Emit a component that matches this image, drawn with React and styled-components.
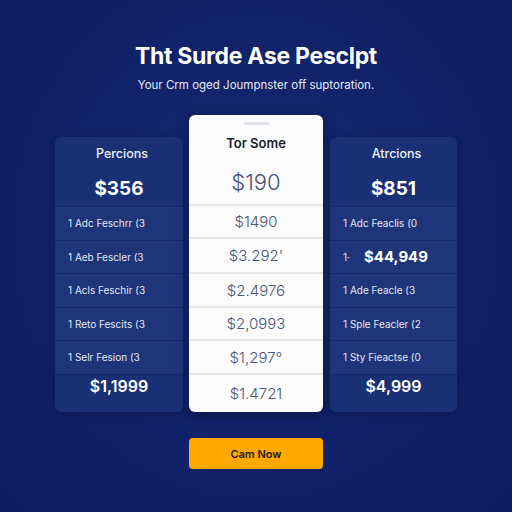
import React from "react";
import styled, { createGlobalStyle } from "styled-components";

const Global = createGlobalStyle`
  html, body { margin: 0; padding: 0; }
  body { background: #0f2166; font-family: Inter, "Open Sans", sans-serif; }
`;

const Page = styled.div`
  width: 512px;
  height: 512px;
  box-sizing: border-box;
  background: radial-gradient(ellipse at 50% 45%, #142a70 0%, #10226a 55%, #0c1c5c 100%);
  display: flex;
  flex-direction: column;
  align-items: center;
  padding-top: 41px;
  color: #fff;
`;

const Title = styled.h1`
  margin: 0;
  font-size: 23px;
  font-weight: 700;
  line-height: 30px;
  letter-spacing: -0.3px;
`;

const Subtitle = styled.p`
  margin: 0;
  margin-top: 6px;
  font-size: 11.5px;
  line-height: 16px;
  color: #e6e9f5;
`;

const Cards = styled.div`
  margin-top: 22px;
  display: flex;
  align-items: flex-end;
  gap: 6px;
`;

const SideCard = styled.div`
  width: ${(p) => p.$w}px;
  height: 275px;
  border-radius: 6px;
  background: #1a3075;
  display: flex;
  flex-direction: column;
  overflow: hidden;
  box-shadow: 0 2px 10px rgba(0, 0, 0, 0.25);
`;

const SideHead = styled.div`
  height: 69px;
  display: flex;
  flex-direction: column;
  align-items: center;
  box-sizing: border-box;
  padding-top: 9px;
`;

const SideName = styled.div`
  font-size: 12.5px;
  line-height: 16px;
  font-weight: 500;
  color: #eef0f8;
  padding-left: 6px;
`;

const SidePrice = styled.div`
  margin-top: 15px;
  font-size: 19px;
  line-height: 24px;
  font-weight: 700;
  color: #fff;
`;

const SideRow = styled.div`
  height: 33.5px;
  box-sizing: border-box;
  border-top: 1.5px solid #152868;
  background: #1e3679;
  display: flex;
  align-items: center;
  padding-left: 13px;
  font-size: 10px;
  color: #e2e6f3;
  white-space: nowrap;
`;

const BigRowText = styled.span`
  font-size: 15px;
  font-weight: 700;
  color: #fff;
  margin-left: 14px;
`;

const SideFoot = styled.div`
  flex: 1;
  border-top: 1.5px solid #152868;
  display: flex;
  align-items: flex-start;
  justify-content: center;
  padding-top: 1px;
  font-size: 16px;
  font-weight: 600;
  color: #fff;
`;

const MidCard = styled.div`
  width: 134px;
  height: 297px;
  border-radius: 6px;
  background: #fcfcfd;
  display: flex;
  flex-direction: column;
  overflow: hidden;
  box-shadow: 0 4px 14px rgba(0, 0, 0, 0.35);
`;

const MidHead = styled.div`
  height: 89px;
  display: flex;
  flex-direction: column;
  align-items: center;
  box-sizing: border-box;
  padding-top: 7px;
`;

const Handle = styled.div`
  width: 25px;
  height: 3px;
  border-radius: 2px;
  background: #dfe1e8;
`;

const MidName = styled.div`
  margin-top: 10px;
  font-size: 13px;
  font-weight: 600;
  line-height: 16px;
  color: #1a1d2b;
`;

const MidPrice = styled.div`
  margin-top: 18px;
  font-size: 22px;
  font-weight: 300;
  line-height: 26px;
  color: #475373;
`;

const MidRow = styled.div`
  height: ${(p) => p.$h}px;
  box-sizing: border-box;
  border-top: 2px solid #e6e8ee;
  display: flex;
  align-items: center;
  justify-content: center;
  font-size: 15px;
  font-weight: 300;
  color: #4a5676;
`;

const Button = styled.button`
  margin-top: 26px;
  width: 134px;
  height: 31px;
  border: none;
  border-radius: 4px;
  background: #ffa800;
  color: #1c1a20;
  font-family: Inter, "Open Sans", sans-serif;
  font-size: 11px;
  font-weight: 600;
  cursor: pointer;
`;

const leftRows = [
  "1 Adc Feschrr (3",
  "1 Aeb Fescler (3",
  "1 Acls Feschir (3",
  "1 Reto Fescits (3",
  "1 Selr Fesion (3",
];

const rightRows = [
  "1 Adc Feaclis (0",
  null,
  "1 Ade Feacle (3",
  "1 Sple Feacler (2",
  "1 Sty Fieactse (0",
];

const midRows = [
  ["$1490", 33],
  ["$3.292'", 35],
  ["$2.4976", 34],
  ["$2,0993", 33],
  ["$1,297°", 34],
  ["$1.4721", 39],
];

export default function App() {
  return (
    <Page>
      <Global />
      <Title>Tht Surde Ase Pesclpt</Title>
      <Subtitle>Your Crm oged Joumpnster off suptoration.</Subtitle>
      <Cards>
        <SideCard $w={128}>
          <SideHead>
            <SideName>Percions</SideName>
            <SidePrice>$356</SidePrice>
          </SideHead>
          {leftRows.map((r, i) => (
            <SideRow key={i}>{r}</SideRow>
          ))}
          <SideFoot>$1,1999</SideFoot>
        </SideCard>
        <MidCard>
          <MidHead>
            <Handle />
            <MidName>Tor Some</MidName>
            <MidPrice>$190</MidPrice>
          </MidHead>
          {midRows.map(([t, h], i) => (
            <MidRow key={i} $h={h}>
              {t}
            </MidRow>
          ))}
        </MidCard>
        <SideCard $w={127} style={{ marginLeft: 1 }}>
          <SideHead>
            <SideName>Atrcions</SideName>
            <SidePrice>$851</SidePrice>
          </SideHead>
          {rightRows.map((r, i) => (
            <SideRow key={i}>
              {r === null ? (
                <>
                  1·<BigRowText>$44,949</BigRowText>
                </>
              ) : (
                r
              )}
            </SideRow>
          ))}
          <SideFoot>$4,999</SideFoot>
        </SideCard>
      </Cards>
      <Button>Cam Now</Button>
    </Page>
  );
}
